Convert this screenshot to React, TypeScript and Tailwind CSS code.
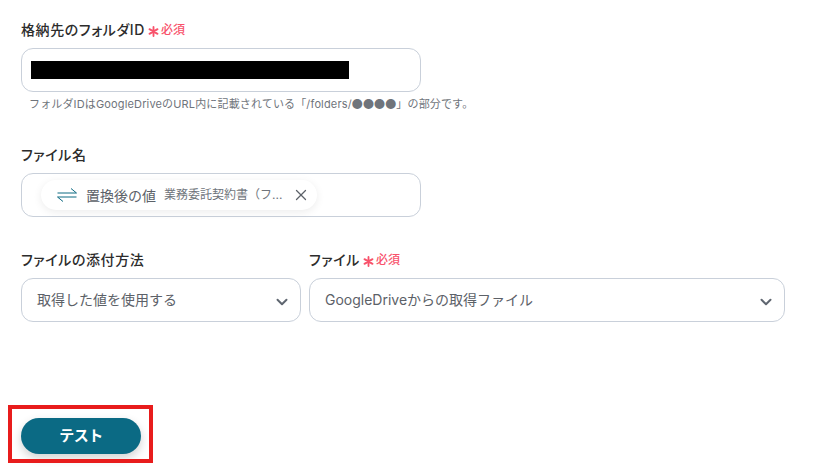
import React from 'react';
import { ChevronDown, X } from 'lucide-react';

function Required() {
  return (
    <span className="flex items-center gap-[2px] text-[12px] font-medium leading-none text-[#f8526b]">
      <svg width="11" height="11" viewBox="0 0 12 12" className="mt-[2px]" stroke="#f8526b" strokeWidth="2" strokeLinecap="round">
        <path d="M6 1v10M1.6 3.4l8.8 5.2M10.4 3.4L1.6 8.6" />
      </svg>
      必須
    </span>
  );
}

function Label({ text, required }: { text: string; required?: boolean }) {
  return (
    <div className="flex h-5 items-center gap-[3px]">
      <span className="text-[14px] font-medium leading-5 tracking-[0.6px] text-[#2c2c2c] [font-feature-settings:'palt']">{text}</span>
      {required && <Required />}
    </div>
  );
}

function Select({ value, className }: { value: string; className: string }) {
  return (
    <div className={`flex h-[44px] items-center justify-between rounded-xl border border-[#c9d0da] bg-white pl-[15px] pr-[9px] ${className}`}>
      <span className="-mt-[2px] text-[14px] text-[#5c6168]">{value}</span>
      <ChevronDown size={18} strokeWidth={2.6} className="mt-[3px] text-[#5f6670]" />
    </div>
  );
}

export default function App() {
  return (
    <div className="relative h-[468px] w-[836px] overflow-hidden bg-white pl-[21px] font-['Inter','Noto_Sans_CJK_JP',sans-serif]">
      {/* フォルダID */}
      <div className="pt-5">
        <Label text="格納先のフォルダID" required />
        <div className="mt-2 flex h-[44px] w-[400px] items-center rounded-xl border border-[#c9d0da] bg-white pl-[9px]">
          <div className="h-[18px] w-[318px] bg-black" />
        </div>
        <p className="mt-[4px] h-[15px] pl-2 text-[11px] leading-[14px] tracking-[0.15px] text-[#6f747b]">
          フォルダIDはGoogleDriveのURL内に記載されている「/folders/<span className="font-['Noto_Sans_CJK_JP']">●●●●</span>」の部分です。
        </p>
      </div>

      {/* ファイル名 */}
      <div className="mt-[34px]">
        <Label text="ファイル名" />
        <div className="mt-2 flex h-[44px] w-[400px] items-center rounded-xl border border-[#c9d0da] bg-white pl-[19px]">
          <div className="flex h-[30px] w-[276px] items-center rounded-full bg-white pl-4 pr-[7px] shadow-[0_2px_8px_rgba(0,0,0,0.08)]">
            <svg width="20" height="14" viewBox="0 0 20 14" fill="none" stroke="#0c6a82" strokeWidth="1">
              <path d="M0.5 5H19.5L14 0.5" />
              <path d="M19.5 9H0.5L6 13.5" />
            </svg>
            <span className="ml-[9px] text-[14px] text-[#5c6168]">置換後の値</span>
            <span className="ml-[8px] flex-1 text-[12px] text-[#6f747b]">業務委託契約書（フ...</span>
            <X size={18} strokeWidth={1.7} className="text-[#5c6168]" />
          </div>
        </div>
      </div>

      {/* 添付方法 */}
      <div className="mt-[33px] flex gap-2">
        <div className="w-[280px]">
          <Label text="ファイルの添付方法" />
          <Select value="取得した値を使用する" className="mt-2 w-full" />
        </div>
        <div className="w-[476px]">
          <Label text="ファイル" required />
          <Select value="GoogleDriveからの取得ファイル" className="mt-2 w-full" />
        </div>
      </div>

      <button className="mt-[96px] flex h-9 w-[120px] items-center justify-center rounded-full bg-[#0b6a84] text-[15px] font-bold tracking-[-0.5px] text-white shadow-[0_4px_10px_rgba(0,0,0,0.18)]">
        テスト
      </button>

      {/* 赤枠 */}
      <div className="absolute left-2 top-[405px] h-[58px] w-[145px] border-4 border-[#e81c1c]" />
    </div>
  );
}
